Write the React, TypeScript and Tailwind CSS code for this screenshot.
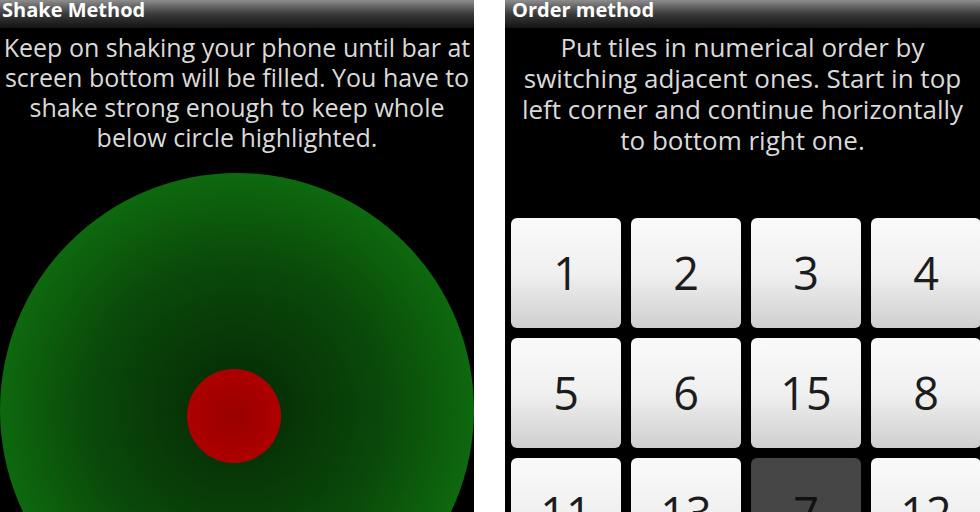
const font = { fontFamily: '"Open Sans", "Noto Sans", sans-serif' };

function TitleBar({ title, className = '' }: { title: string; className?: string }) {
  return (
    <div
      className={`h-[28px] shrink-0 bg-gradient-to-b from-[#8e8e8e] via-[#3a3a3a] to-[#141414] text-white font-bold text-[20px] leading-[19px] ${className}`}
    >
      {title}
    </div>
  );
}

function Tile({ n, empty = false }: { n: number; empty?: boolean }) {
  return (
    <div
      className={`h-[110px] rounded-[6px] flex items-center justify-center text-[45px] ${
        empty
          ? 'bg-[#454545] text-[#111]'
          : 'bg-gradient-to-b from-[#fafafa] via-[#f0f0f0] to-[#cfcfcf] text-[#1c1c1c]'
      }`}
    >
      {n}
    </div>
  );
}

export default function App() {
  const tiles = [1, 2, 3, 4, 5, 6, 15, 8, 11, 13, 7, 12];
  return (
    <div className="w-[980px] h-[512px] bg-white flex overflow-hidden" style={font}>
      {/* Shake method screen */}
      <div className="w-[474px] h-full bg-black flex flex-col overflow-hidden">
        <TitleBar title="Shake Method" className="pl-[2px]" />
        <p className="shrink-0 mt-[4px] text-center text-[#dadada] text-[25px] leading-[30px] whitespace-nowrap">
          Keep on shaking your phone until bar at
          <br />
          screen bottom will be filled. You have to
          <br />
          shake strong enough to keep whole
          <br />
          below circle highlighted.
        </p>
        <div className="mt-[21px] w-[474px] h-[474px] shrink-0 rounded-full bg-[radial-gradient(circle_at_50%_50%,#052805_0%,#0a4a0a_45%,#107a10_85%,#168a16_100%)] flex items-center justify-center">
          <div className="w-[94px] h-[94px] rounded-full bg-[radial-gradient(circle,#9a0000_0%,#b00000_80%,#a00505_100%)] relative -left-[3px] top-[6px]" />
        </div>
      </div>

      {/* Order method screen */}
      <div className="ml-[31px] flex-1 h-full bg-black flex flex-col overflow-hidden">
        <TitleBar title="Order method" className="pl-[7px]" />
        <p className="shrink-0 mt-[4px] text-center text-[#dadada] text-[26px] leading-[31px] whitespace-nowrap">
          Put tiles in numerical order by
          <br />
          switching adjacent ones. Start in top
          <br />
          left corner and continue horizontally
          <br />
          to bottom right one.
        </p>
        <div className="shrink-0 mt-[62px] pl-[6px] grid grid-cols-[repeat(4,110px)] gap-[10px]">
          {tiles.map((n) => (
            <Tile key={n} n={n} empty={n === 7} />
          ))}
        </div>
      </div>
    </div>
  );
}
